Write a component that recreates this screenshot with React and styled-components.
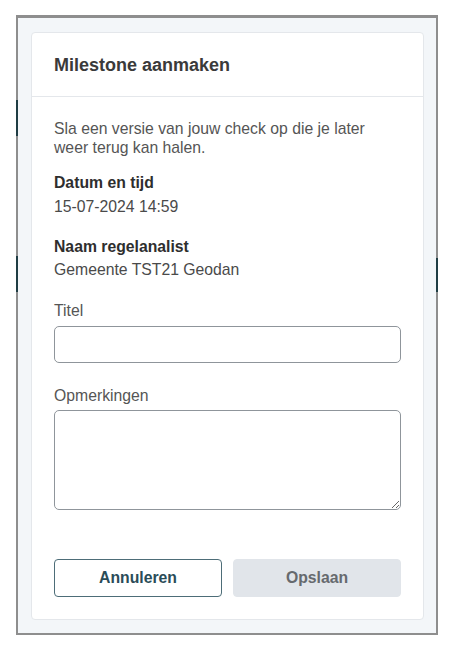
import React from "react";
import styled, { createGlobalStyle } from "styled-components";

const Global = createGlobalStyle`
  html, body { margin: 0; padding: 0; background: #ffffff; }
  body { font-family: "Liberation Sans", Arial, sans-serif; }
  * { box-sizing: border-box; }
`;

const Page = styled.div`
  padding: 15px 16px 0 16px;
`;

const Frame = styled.div`
  position: relative;
  width: 422px;
  height: 620px;
  border: 2px solid #8e8e8e;
  border-top-width: 3px;
  background: #f3f6f9;
  padding: 14px 13px 13px 13px;
  display: flex;
`;

const EdgeMark = styled.span`
  position: absolute;
  width: 2px;
  background: #1f3d44;
  top: ${(p) => p.$top}px;
  height: ${(p) => p.$h}px;
  ${(p) => (p.$side === "left" ? "left: -2px;" : "right: -2px;")}
`;

const Card = styled.div`
  flex: 1;
  background: #ffffff;
  border: 1px solid #e4e7eb;
  border-radius: 4px;
  display: flex;
  flex-direction: column;
`;

const Header = styled.div`
  height: 64px;
  padding: 0 22px;
  display: flex;
  align-items: center;
  border-bottom: 1px solid #e4e7eb;
`;

const Title = styled.h2`
  margin: 0;
  font-size: 18px;
  line-height: 22px;
  font-weight: bold;
  color: #3a3a3a;
`;

const Body = styled.div`
  flex: 1;
  padding: 22px 22px 22px 22px;
  display: flex;
  flex-direction: column;
`;

const Intro = styled.p`
  margin: 0;
  font-size: 15.75px;
  line-height: 19px;
  color: #555555;
`;

const InfoLabel = styled.div`
  margin-top: ${(p) => p.$mt}px;
  font-size: 15.75px;
  line-height: 19px;
  font-weight: bold;
  color: #2e2e2e;
`;

const InfoValue = styled.div`
  margin-top: ${(p) => p.$mt}px;
  font-size: 15.75px;
  line-height: 19px;
  color: #4a4a4a;
`;

const FieldLabel = styled.label`
  display: block;
  margin-top: ${(p) => p.$mt}px;
  font-size: 15.75px;
  line-height: 19px;
  color: #555555;
`;

const TextInput = styled.input`
  display: block;
  margin-top: 6px;
  width: 347px;
  height: 37px;
  border: 1px solid #8f959b;
  border-radius: 5px;
  background: #fff;
  font-family: inherit;
  font-size: 15.75px;
  padding: 0 10px;
  outline: none;
`;

const TextArea = styled.textarea`
  display: block;
  margin-top: 5px;
  width: 347px;
  height: 100px;
  border: 1px solid #8f959b;
  border-radius: 5px;
  background: #fff;
  font-family: inherit;
  font-size: 15.75px;
  padding: 8px 10px;
  outline: none;
`;

const Footer = styled.div`
  margin-top: auto;
  display: grid;
  grid-template-columns: 168px 168px;
  column-gap: 11px;
`;

const Button = styled.button`
  height: 38px;
  border-radius: 4px;
  font-family: inherit;
  font-size: 15.75px;
  font-weight: bold;
  cursor: pointer;
  border: 1px solid ${(p) => (p.$primary ? "#e1e5ea" : "#4d6d78")};
  background: ${(p) => (p.$primary ? "#e1e5ea" : "#ffffff")};
  color: ${(p) => (p.$primary ? "#666a6e" : "#2a4c58")};
`;

export default function App() {
  return (
    <Page>
      <Global />
      <Frame>
        <EdgeMark $side="left" $top={82} $h={36} />
        <EdgeMark $side="left" $top={238} $h={36} />
        <EdgeMark $side="right" $top={240} $h={34} />
        <Card>
          <Header>
            <Title>Milestone aanmaken</Title>
          </Header>
          <Body>
            <Intro>Sla een versie van jouw check op die je later weer terug kan halen.</Intro>
            <InfoLabel $mt={16}>Datum en tijd</InfoLabel>
            <InfoValue $mt={5}>15-07-2024 14:59</InfoValue>
            <InfoLabel $mt={21}>Naam regelanalist</InfoLabel>
            <InfoValue $mt={4}>Gemeente TST21 Geodan</InfoValue>
            <FieldLabel $mt={22} htmlFor="titel">Titel</FieldLabel>
            <TextInput id="titel" type="text" />
            <FieldLabel $mt={23} htmlFor="opm">Opmerkingen</FieldLabel>
            <TextArea id="opm" />
            <Footer>
              <Button type="button">Annuleren</Button>
              <Button type="button" $primary>Opslaan</Button>
            </Footer>
          </Body>
        </Card>
      </Frame>
    </Page>
  );
}
